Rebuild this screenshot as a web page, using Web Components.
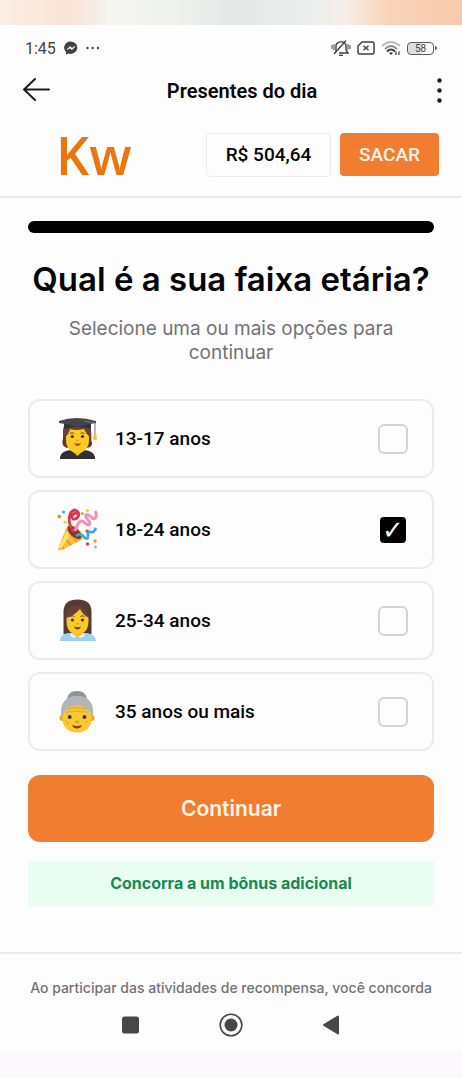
<!DOCTYPE html>
<html lang="pt-BR">
<head>
<meta charset="utf-8">
<meta name="viewport" content="width=device-width, initial-scale=1">
<title>Presentes do dia</title>
<style>
  body {
    margin: 0;
    background-color: #fefdfe;
    color: #050507;
    font-family: Roboto, "Liberation Sans", sans-serif;
    --orange: #f17e30;
    --line: #ebeaef;
    --muted: #737276;
    --ui: Inter, "Liberation Sans", sans-serif;
  }
</style>
</head>
<body>
<kw-page>
  <kw-status-bar slot="top" time="1:45" battery="58"></kw-status-bar>
  <kw-app-bar slot="top">Presentes do dia</kw-app-bar>
  <kw-wallet slot="top" balance="R$ 504,64">Kw</kw-wallet>

  <kw-question>
    <span slot="title">Qual é a sua faixa etária?</span>
    <span slot="hint">Selecione uma ou mais opções para continuar</span>
    <kw-option icon="student">13-17 anos</kw-option>
    <kw-option icon="party" checked>18-24 anos</kw-option>
    <kw-option icon="office">25-34 anos</kw-option>
    <kw-option icon="senior">35 anos ou mais</kw-option>
    <span slot="submit">Continuar</span>
    <span slot="bonus">Concorra a um bônus adicional</span>
  </kw-question>

  <kw-legal slot="bottom">Ao participar das atividades de recompensa, você concorda</kw-legal>
  <kw-nav-bar slot="bottom"></kw-nav-bar>
</kw-page>

<script>
const ICONS = {
  student: `
    <path d="M10 10 C8 16 10 20 8.500 25 C8 29 10 32 15 32 H32 C37 32 39 29 37.500 25 C37 20 38 16 36 10 Z" fill="#5b3a32"/>
    <path d="M6 43 V41 Q7 35 17 34 H30 Q40 35 41 41 V43 Z" fill="#303033"/>
    <path d="M18 32 H29 V35 L23.5 40 L18 35 Z" fill="#f5b916"/>
    <path d="M12 20 L15 12 H31 L35 20 V24 C35 33 29 37 23.500 37 C18 37 12 33 12 24 Z" fill="#fcc927"/>
    <path d="M10 11 H36 Q37 17 36 21 Q32 18 30 13 Q22 15 16 13 Q15 18 11 21 Q9 17 10 11 Z" fill="#684238"/>
    <path d="M10 7 H37 V13 Q23 9 10 13 Z" fill="#333438"/>
    <path d="M5 5 Q22 -1 42 5 V7 Q32 8 24 11 Q14 8 5 7 Z" fill="#45464b"/>
    <path d="M30 5 L41 7 V19" fill="none" stroke="#74767b" stroke-width="1"/>
    <path d="M40 17 h2 l1 6 q-2 2 -4 0 Z" fill="#f4bd22"/>
    <circle cx="18.3" cy="20.5" r="1.6" fill="#49382f"/><circle cx="28.5" cy="20.5" r="1.6" fill="#49382f"/>
    <path d="M16 17.5 q2 -1.5 4 0 M26.5 17.5 q2 -1.5 4 0" fill="none" stroke="#6d4435" stroke-width="1"/>
    <path d="M22 24 q1.5 1 3 0" fill="none" stroke="#dd9422" stroke-width="1"/>
    <path d="M20 27 Q23.5 28 27 27 Q26 30 23.5 30 Q21 30 20 27 Z" fill="#bd4838"/>`,
  party: `
    <path d="M4 42 L13 19 Q23 20 29 32 L8 43 Q4 44 4 42 Z" fill="#f9c338"/>
    <path d="M9 30 L17 38 M12 23 L23 35 M6 37 L10 42" stroke="#e79b25" stroke-width="1.8"/>
    <path d="M5 40 L14 22 L17 26 L7 42 Z" fill="#ffe36e"/>
    <ellipse cx="20.5" cy="25.5" rx="9" ry="4.8" transform="rotate(42 20.5 25.5)" fill="#81362e" stroke="#f1ac32" stroke-width="1"/>
    <path d="M20 25 C13 17 14 4 21 3 C27 5 25 13 19 12 C15 9 23 3 24 8" fill="none" stroke="#d9374d" stroke-width="2.8"/>
    <path d="M21 24 C25 12 28 13 31 16 C35 20 38 17 34 13 C29 7 33 6 37 10 C41 14 44 10 41 4" fill="none" stroke="#ee91bb" stroke-width="3"/>
    <path d="M22 29 C26 25 29 29 31 31 C35 33 34 28 34 25 C37 23 38 29 42 21" fill="none" stroke="#36abe0" stroke-width="2.8"/>
    <circle cx="9.5" cy="5" r="1.6" fill="#40abe0"/><circle cx="5.3" cy="9.5" r="1.8" fill="#e7892e"/>
    <circle cx="11" cy="15" r="1.6" fill="#f3c537"/><circle cx="28.3" cy="6.5" r="1.5" fill="#e7a033"/>
    <circle cx="33.5" cy="3.5" r="1.6" fill="#f5c83a"/><circle cx="33" cy="24" r="1.6" fill="#d74354"/>
    <circle cx="33.5" cy="37" r="1.7" fill="#d74354"/><circle cx="41" cy="34" r="1.7" fill="#e9963a"/>
    <circle cx="41.5" cy="40" r="1.5" fill="#e898ae"/>`,
  office: `
    <path d="M9.500 36 V13 C10 5 15 1.500 23.500 1.500 C32 1.500 37 5 37.500 13 V36 Z" fill="#583a35"/>
    <path d="M6 43 Q6 36 14 35 H33 Q41 36 42 43 Z" fill="#9ed0f4"/>
    <path d="M18 32 H29 V36 L23.500 40 L18 36 Z" fill="#f3b61c"/>
    <path d="M17 35 L23.500 39 L30 35 L31 38 L27 40 L23.500 38 L20 40 L16 38 Z" fill="#dff1fc"/>
    <path d="M12.500 19 Q20 17 26 10 Q29 16 34.500 19 V23 C34.500 33 29 36.500 23.500 36.500 C18 36.500 12.500 33 12.500 23 Z" fill="#fcca28"/>
    <path d="M12 20 V13 Q17 6 26 8 Q33 9 35 20 Q29 17 26 11 Q20 18 12 20 Z" fill="#654139"/>
    <circle cx="18.500" cy="22" r="1.600" fill="#4c382e"/><circle cx="28.500" cy="22" r="1.600" fill="#4c382e"/>
    <path d="M16.500 18.500 q2 -1.500 4 0 M26.500 18.500 q2 -1.500 4 0" fill="none" stroke="#6a4235" stroke-width="1"/>
    <path d="M22 25.500 q1.500 1 3 0" fill="none" stroke="#dc9322" stroke-width="1"/>
    <path d="M20 28.500 Q23.500 30 27 28.500 Q26 31.500 23.500 31.500 Q21 31.500 20 28.500 Z" fill="#853d31"/>`,
  senior: `
    <path d="M13 12 C13 5 17 2 23 2 C29 2 33 5 33 12 Z" fill="#929397"/>
    <path d="M7.500 29 C5 14 12 7 23 7 C34 7 41.500 14 38.500 29 Z" fill="#b4b5b8"/>
    <circle cx="8.500" cy="29" r="3" fill="#e9a629"/><circle cx="37.500" cy="29" r="3" fill="#e9a629"/>
    <path d="M8.500 27 Q11 18 23 16 Q35 18 37.500 27 C38.500 38 32 43.500 23 43.500 C14 43.500 7.500 38 8.500 27 Z" fill="#fcc730"/>
    <path d="M14 20 Q23 17 32 20 M17 23 Q23 21 29 23 M11 32 l3 2 M13 36 l2 -2 M34 32 l-3 2" fill="none" stroke="#e7a229" stroke-width="1"/>
    <path d="M12 24 q3 -3 7 -1 M27 23 q4 -2 7 1" fill="none" stroke="#c9b385" stroke-width="1.500"/>
    <circle cx="15.700" cy="28" r="2" fill="#4a3a30"/><circle cx="30.500" cy="28" r="2" fill="#4a3a30"/>
    <path d="M21 32 q2 2 4 0" fill="none" stroke="#d88d20" stroke-width="1.300"/>
    <path d="M18 36 Q23 38 28 36 Q27 39.500 23 39.500 Q19 39.500 18 36 Z" fill="#854030"/>`
};

class KwPage extends HTMLElement {
  constructor() {
    super();
    this.attachShadow({ mode: 'open' }).innerHTML = `
      <style>
        :host {
          display: flex;
          flex-direction: column;
          min-height: 100vh;
        }

        .backdrop {
          height: 25px;
          background: linear-gradient(90deg, #fbeee4 0%, #f9e4d7 15%, #f6ebe3 20%, #f5f6f3 24%, #eff1ef 38%, #e5e8e6 50%, #eceeed 68%, #f6eee7 75%, #f9d4b9 84%, #f8caad 100%);
        }

        footer {
          margin-top: auto;
        }
      </style>
      <div class="backdrop"></div>
      <header><slot name="top"></slot></header>
      <main><slot></slot></main>
      <footer><slot name="bottom"></slot></footer>
    `;
  }
}

class KwStatusBar extends HTMLElement {
  connectedCallback() {
    this.attachShadow({ mode: 'open' }).innerHTML = `
      <style>
        :host {
          display: flex;
          justify-content: space-between;
          align-items: center;
          height: 46px;
          padding: 0 25px;
          color: #424144;
          font-size: 16px;
        }

        div {
          display: flex;
          align-items: center;
          gap: 8px;
        }

        .system {
          gap: 6px;
        }

        svg {
          display: block;
        }

        .battery {
          display: flex;
          align-items: center;
          gap: 1px;
        }

        .level {
          box-sizing: border-box;
          width: 27px;
          height: 13px;
          border: 1px solid #5b5a5d;
          border-radius: 4px;
          background: linear-gradient(90deg, #dededf 58%, transparent 58%);
          font-size: 10px;
          line-height: 11px;
          text-align: center;
        }

        .cap {
          width: 2px;
          height: 4px;
          border-radius: 0 2px 2px 0;
          background-color: #5b5a5d;
        }
      </style>
      <div>
        <span>${this.getAttribute('time')}</span>
        <svg width="14" height="14" viewBox="0 0 14 14"><path d="M7 .5 A6.500 6.200 0 1 1 4.500 12.500 L2 13.500 V11 A6.300 6.200 0 0 1 7 .5" fill="#424144"/><path d="M3 8.500 L6 5.500 L8 7.200 L11 5.300 L8 8.700 L6 7 Z" fill="#fff" stroke="#fff" stroke-width=".6"/></svg>
        <svg width="14" height="4" viewBox="0 0 14 4" fill="#424144"><circle cx="1.500" cy="2" r="1.200"/><circle cx="6.700" cy="2" r="1.200"/><circle cx="12" cy="2" r="1.200"/></svg>
      </div>
      <div class="system">
        <svg width="20" height="18" viewBox="0 0 20 18" fill="none" stroke="#424144" stroke-width="1.400"><path d="M5 13 V7 C5 1.500 15 1.500 15 7 V11 L17 14 H8"/><path d="M3 15 L15 1.500"/><path d="M8 16.300 h4"/><path d="M1 6 v4 M3 5 v6 M17 5 v6 M19 6 v4" stroke-width="1"/></svg>
        <svg width="18" height="14" viewBox="0 0 18 14" fill="none" stroke="#424144" stroke-width="1.500"><path d="M5 1 H15.500 Q17 1 17 2.500 V11.500 Q17 13 15.500 13 H2.500 Q1 13 1 11.500 V5 Z"/><path d="M6.500 4.700 l5 4.600 M11.500 4.700 l-5 4.600"/></svg>
        <svg width="20" height="16" viewBox="0 0 20 16" fill="none"><path d="M1 6 Q10 -2 19 6" stroke="#bbb" stroke-width="1.800"/><path d="M4 9 Q10 3 16 9" stroke="#8d8c8e" stroke-width="1.800"/><path d="M6 11.500 Q10 7.500 14 11.500" stroke="#424144" stroke-width="2"/><path d="M8 13 Q10 11.500 12 13 L10 15 Z" fill="#424144"/><path d="M15 11.500 v3.500 M18 11.500 v3.500" stroke="#424144" stroke-width="1.300"/></svg>
        <span class="battery"><span class="level">${this.getAttribute('battery')}</span><span class="cap"></span></span>
      </div>
    `;
  }
}

class KwAppBar extends HTMLElement {
  constructor() {
    super();
    this.attachShadow({ mode: 'open' }).innerHTML = `
      <style>
        :host {
          display: grid;
          grid-template-columns: 28px 1fr 8px;
          align-items: center;
          height: 40px;
          padding: 0 20px 0 22px;
        }

        h1 {
          margin: 0;
          font-size: 20px;
          font-weight: 600;
          line-height: 24px;
          text-align: center;
        }

        button {
          padding: 0;
          border: 0;
          background: none;
          cursor: pointer;
        }

        button:last-child {
          justify-self: end;
        }

        svg {
          display: block;
        }
      </style>
      <button aria-label="Voltar">
        <svg width="28" height="26" viewBox="0 0 28 26" fill="none" stroke="#1c1b1f" stroke-width="2" stroke-linecap="round" stroke-linejoin="round"><path d="M13 1 L2 11.500 L13 22 M2 11.500 H27"/></svg>
      </button>
      <h1><slot></slot></h1>
      <button aria-label="Mais opções">
        <svg width="5" height="26" viewBox="0 0 5 26" fill="#1c1b1f"><circle cx="2.500" cy="2.500" r="2.200"/><circle cx="2.500" cy="12.500" r="2.200"/><circle cx="2.500" cy="22.500" r="2.200"/></svg>
      </button>
    `;
  }
}

class KwWallet extends HTMLElement {
  connectedCallback() {
    this.attachShadow({ mode: 'open' }).innerHTML = `
      <style>
        :host {
          display: flex;
          align-items: center;
          gap: 9px;
          box-sizing: border-box;
          height: 87px;
          padding: 2px 23px 0 56px;
          border-bottom: 2px solid var(--line);
          font-size: 19px;
          font-weight: 500;
        }

        .logo {
          margin-right: auto;
          color: #ec750d;
          font: 600 52px/56px "Open Sans", "Noto Sans", sans-serif;
        }

        .balance,
        button {
          box-sizing: border-box;
          height: 44px;
          border-radius: 4px;
          line-height: 42px;
          text-align: center;
        }

        .balance {
          width: 125px;
          border: 1px solid var(--line);
        }

        button {
          width: 99px;
          height: 43px;
          padding: 0;
          border: 0;
          background-color: var(--orange);
          color: #fff5e8;
          font-family: inherit;
          font-size: 19px;
          font-weight: 500;
          cursor: pointer;
        }
      </style>
      <span class="logo"><slot></slot></span>
      <span class="balance">${this.getAttribute('balance')}</span>
      <button>SACAR</button>
    `;
  }
}

class KwQuestion extends HTMLElement {
  constructor() {
    super();
    this.attachShadow({ mode: 'open' }).innerHTML = `
      <style>
        :host {
          display: block;
          padding: 23px 28px 0;
          font-family: var(--ui);
          text-align: center;
        }

        .progress {
          height: 12px;
          border-radius: 6px;
          background-color: #000;
        }

        h2 {
          margin: 24px 0 16px;
          font-size: 33px;
          font-weight: 600;
          line-height: 44px;
        }

        p {
          margin: 0;
        }

        .hint {
          padding: 0 32px;
          color: var(--muted);
          font-size: 19px;
          line-height: 24px;
        }

        .options {
          display: grid;
          gap: 12px;
          margin: 34px 0 24px;
        }

        button {
          display: block;
          width: 100%;
          height: 67px;
          border: 0;
          border-radius: 12px;
          background-color: var(--orange);
          color: #fff5e8;
          font-family: inherit;
          font-size: 21px;
          font-weight: 600;
          cursor: pointer;
        }

        .bonus {
          margin-top: 19px;
          background-color: #e9fdf2;
          color: #168a53;
          font-size: 16px;
          font-weight: 700;
          line-height: 45px;
        }
      </style>
      <div class="progress"></div>
      <h2><slot name="title"></slot></h2>
      <p class="hint"><slot name="hint"></slot></p>
      <div class="options"><slot></slot></div>
      <button><slot name="submit"></slot></button>
      <p class="bonus"><slot name="bonus"></slot></p>
    `;
  }
}

class KwOption extends HTMLElement {
  connectedCallback() {
    this.attachShadow({ mode: 'open' }).innerHTML = `
      <style>
        :host {
          display: block;
          font-family: Roboto, "Liberation Sans", sans-serif;
        }

        label {
          display: flex;
          align-items: center;
          gap: 15px;
          box-sizing: border-box;
          height: 79px;
          padding: 0 24px;
          border: 2px solid var(--line);
          border-radius: 12px;
          font-size: 19px;
          font-weight: 500;
          text-align: left;
          cursor: pointer;
        }

        .text {
          flex-grow: 1;
        }

        input {
          display: grid;
          place-items: center;
          appearance: none;
          box-sizing: border-box;
          width: 30px;
          height: 30px;
          margin: 0;
          border: 2px solid #d3d2d6;
          border-radius: 6px;
        }

        input:checked {
          border-color: transparent;
          background: #000 padding-box;
        }

        input:checked::before {
          content: "✓";
          color: #fff;
          font: 26px/26px "DejaVu Sans", sans-serif;
        }
      </style>
      <label>
        <svg width="46" height="46" viewBox="0 0 46 46" aria-hidden="true">${ICONS[this.getAttribute('icon')]}</svg>
        <span class="text"><slot></slot></span>
        <input type="checkbox"${this.hasAttribute('checked') ? ' checked' : ''}>
      </label>
    `;
  }
}

class KwLegal extends HTMLElement {
  constructor() {
    super();
    this.attachShadow({ mode: 'open' }).innerHTML = `
      <style>
        :host {
          display: block;
          padding: 24px 0 12px;
          border-top: 2px solid var(--line);
          color: var(--muted);
          font-family: var(--ui);
          font-size: 14px;
          font-weight: 500;
          line-height: 20px;
          text-align: center;
          white-space: nowrap;
        }
      </style>
      <slot></slot>
    `;
  }
}

class KwNavBar extends HTMLElement {
  constructor() {
    super();
    this.attachShadow({ mode: 'open' }).innerHTML = `
      <style>
        :host {
          display: block;
          border-bottom: 24px solid #fbf9fc;
        }

        nav {
          display: flex;
          justify-content: center;
          gap: 76px;
          padding: 3px 0 17px;
        }

        button {
          padding: 0;
          border: 0;
          background: none;
          cursor: pointer;
        }

        svg {
          display: block;
        }
      </style>
      <nav>
        <button aria-label="Recentes"><svg width="24" height="24" viewBox="0 0 24 24"><rect x="3" y="3.500" width="17" height="17" rx="2.500" fill="#474649"/></svg></button>
        <button aria-label="Início"><svg width="24" height="24" viewBox="0 0 24 24"><circle cx="12" cy="12" r="10.800" fill="none" stroke="#474649" stroke-width="1.600"/><circle cx="12" cy="12" r="6.500" fill="#474649"/></svg></button>
        <button aria-label="Voltar"><svg width="24" height="24" viewBox="0 0 24 24"><path d="M5 12 L19 3.500 V20.500 Z" fill="#474649" stroke="#474649" stroke-width="2" stroke-linejoin="round"/></svg></button>
      </nav>
    `;
  }
}

customElements.define('kw-page', KwPage);
customElements.define('kw-status-bar', KwStatusBar);
customElements.define('kw-app-bar', KwAppBar);
customElements.define('kw-wallet', KwWallet);
customElements.define('kw-question', KwQuestion);
customElements.define('kw-option', KwOption);
customElements.define('kw-legal', KwLegal);
customElements.define('kw-nav-bar', KwNavBar);
</script>
</body>
</html>
